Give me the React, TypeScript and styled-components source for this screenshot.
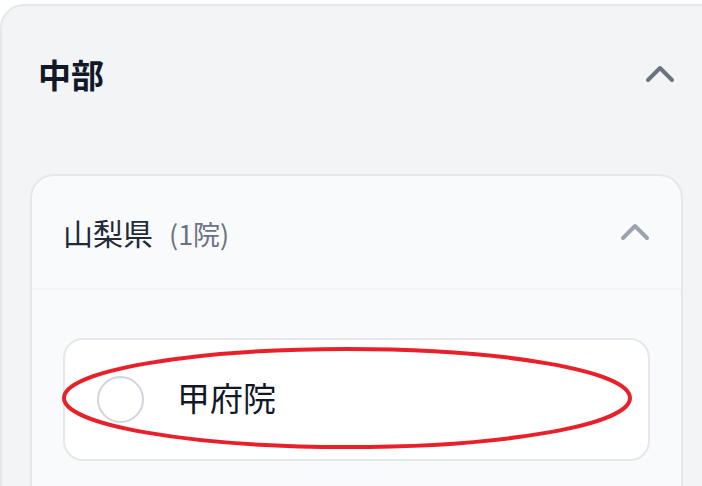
import React from "react";
import styled, { createGlobalStyle } from "styled-components";

const GlobalStyle = createGlobalStyle`
  html, body {
    margin: 0;
    padding: 0;
    background: #ffffff;
    overflow: hidden;
    font-family: "Noto Sans CJK JP", "Noto Sans", sans-serif;
  }
`;

const Page = styled.div`
  width: 702px;
  height: 486px;
  overflow: hidden;
  padding-top: 4px;
  box-sizing: border-box;
`;

const Region = styled.section`
  width: 760px;
  min-height: 520px;
  box-sizing: border-box;
  background: #f3f4f6;
  border: 2px solid #e5e7eb;
  border-radius: 24px;
  padding: 28px 75px 0 28px;
`;

const RegionHeader = styled.div`
  display: flex;
  align-items: center;
  justify-content: space-between;
  height: 80px;
  padding: 0 7px 0 8px;
  margin-bottom: 60px;
`;

const RegionTitle = styled.h2`
  margin: 0;
  font-size: 33px;
  font-weight: 700;
  color: #111827;
  letter-spacing: 0;
`;

const Chevron = styled.svg<{ $tone: string }>`
  display: block;
  width: 32px;
  height: 20px;
  color: ${(p) => p.$tone};
`;

const ChevronUp = ({ tone }: { tone: string }) => (
  <Chevron $tone={tone} viewBox="0 0 32 20" fill="none">
    <polyline
      points="4,16 16,4 28,16"
      stroke="currentColor"
      strokeWidth="4"
      strokeLinecap="round"
      strokeLinejoin="round"
    />
  </Chevron>
);

const Prefecture = styled.div`
  background: #f9fafb;
  border: 2px solid #e5e7eb;
  border-radius: 24px;
  min-height: 400px;
`;

const PrefHeader = styled.div`
  display: flex;
  align-items: center;
  justify-content: space-between;
  height: 112px;
  padding: 0 30px 0 31px;
  border-bottom: 2px solid #f3f4f6;
`;

const PrefTitle = styled.div`
  display: flex;
  align-items: baseline;
  font-size: 30px;
  color: #1f2937;
`;

const Count = styled.span`
  margin-left: 16px;
  font-size: 27px;
  color: #6b7280;
`;

const PrefBody = styled.div`
  padding: 48px 31px;
`;

const Clinic = styled.label`
  position: relative;
  display: flex;
  align-items: center;
  gap: 33px;
  height: 123px;
  box-sizing: border-box;
  padding: 0 32px;
  background: #ffffff;
  border: 2px solid #e5e7eb;
  border-radius: 20px;
`;

const Radio = styled.span`
  width: 47px;
  height: 47px;
  box-sizing: border-box;
  border: 2px solid #d1d5db;
  border-radius: 50%;
  background: #ffffff;
  flex: none;
`;

const ClinicName = styled.span`
  font-size: 33px;
  color: #111827;
  margin-bottom: 6px;
`;

const Highlight = styled.svg`
  position: absolute;
  left: 0;
  top: 0;
  width: 100%;
  height: 100%;
  overflow: visible;
  pointer-events: none;
`;

export default function App() {
  return (
    <>
      <GlobalStyle />
      <Page>
        <Region>
          <RegionHeader>
            <RegionTitle>中部</RegionTitle>
            <ChevronUp tone="#6b7280" />
          </RegionHeader>
          <Prefecture>
            <PrefHeader>
              <PrefTitle>
                山梨県<Count>(1院)</Count>
              </PrefTitle>
              <ChevronUp tone="#9ca3af" />
            </PrefHeader>
            <PrefBody>
              <Clinic>
                <Radio />
                <ClinicName>甲府院</ClinicName>
                <Highlight>
                  <ellipse
                    cx="282"
                    cy="58"
                    rx="283"
                    ry="49"
                    fill="none"
                    stroke="#e8202a"
                    strokeWidth="4"
                  />
                </Highlight>
              </Clinic>
            </PrefBody>
          </Prefecture>
        </Region>
      </Page>
    </>
  );
}
